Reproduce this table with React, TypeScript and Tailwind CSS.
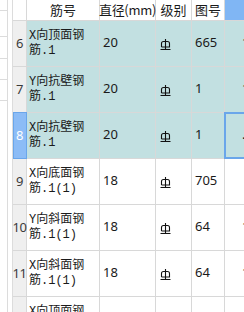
import React from 'react';

type Row = {
  no: number;
  name: string[];
  dia: string;
  fig: string;
  tail: string;
  active?: boolean;
  current?: boolean;
};

const rows: Row[] = [
  { no: 6, name: ['X向顶面钢', '筋.1'], dia: '20', fig: '665', tail: '1', active: true },
  { no: 7, name: ['Y向抗壁钢', '筋.1'], dia: '20', fig: '1', tail: '1', active: true },
  { no: 8, name: ['X向抗壁钢', '筋.1'], dia: '20', fig: '1', tail: '.', active: true, current: true },
  { no: 9, name: ['X向底面钢', '筋.1(1)'], dia: '18', fig: '705', tail: '' },
  { no: 10, name: ['Y向斜面钢', '筋.1(1)'], dia: '18', fig: '64', tail: '1' },
  { no: 11, name: ['X向斜面钢', '筋.1(1)'], dia: '18', fig: '64', tail: '1' },
  { no: 12, name: ['X向顶面钢', '筋.1'], dia: '20', fig: '665', tail: '' },
];

function GradeIII() {
  return (
    <svg width="11" height="11" viewBox="0 0 11 11" fill="none" stroke="#111" strokeWidth="1.1">
      <path d="M5.5 0 V10" />
      <path d="M1.5 8 V4.5 Q1.5 2.5 3.5 2.5 H7.5 Q9.5 2.5 9.5 4.5 V8 H1.5" />
      <path d="M0.5 10.5 H10.5" />
    </svg>
  );
}

export default function App() {
  return (
    <div className="w-[244px] h-[312px] overflow-hidden bg-white flex text-[13px] text-[#1a1a1a] font-['Noto_Sans_CJK_SC','Noto_Sans',sans-serif]">
      <div className="w-[8px] shrink-0 border-r border-[#dcdcdc] flex flex-col">
        <div className="h-[11px] border-b border-[#dcdcdc]" />
        <div className="h-[26px] border-b border-[#dcdcdc]" />
        <div className="h-[22px] border-b border-[#dcdcdc]" />
        <div className="h-[21px] border-b border-[#dcdcdc]" />
        <div className="h-[21px] border-b border-[#dcdcdc]" />
      </div>
      <div className="w-[5px] shrink-0 border-r border-[#dcdcdc]" />

      <div className="flex-1 min-w-0 flex flex-col">
        <div className="h-[21px] shrink-0 flex border-b border-[#d8d8d8]">
          <div className="w-[14px] shrink-0 border-r border-[#d8d8d8]" />
          <div className="w-[73px] shrink-0 border-r border-[#d8d8d8] flex items-center justify-center">筋号</div>
          <div className="w-[56px] shrink-0 border-r border-[#d8d8d8] flex items-center justify-center whitespace-nowrap tracking-[-0.3px]">直径(mm)</div>
          <div className="w-[36px] shrink-0 border-r border-[#d8d8d8] flex items-center justify-center">级别</div>
          <div className="w-[33px] shrink-0 border-r border-[#d8d8d8] flex items-center justify-center">图号</div>
          <div className="flex-1 bg-[#80b6f4]" />
        </div>

        {rows.map(r => (
          <div
            key={r.no}
            className={`h-[46px] shrink-0 flex border-b border-[#d8d8d8] ${r.active ? 'bg-[#c2e0e1]' : 'bg-white'}`}
          >
            <div
              className={`w-[14px] shrink-0 border-r border-[#d8d8d8] relative flex items-center justify-center ${r.current ? 'text-white' : 'bg-[#efefef] text-[#3b3b3b]'}`}
            >
              {r.current && <div className="absolute left-0 right-[-1px] top-[-1px] bottom-[-1px] bg-[#8cbcf6] border border-[#6aa6ea]" />}
              <span className="relative font-['Noto_Sans',sans-serif] text-[13px] tracking-[-0.5px]">{r.no}</span>
            </div>
            <div className="w-[73px] shrink-0 border-r border-[#d8d8d8] pl-[2px] flex flex-col justify-center text-[12px] leading-[15px] whitespace-nowrap font-['Liberation_Mono','Noto_Sans_CJK_SC',monospace]">
              <span>{r.name[0]}</span>
              <span>{r.name[1]}</span>
            </div>
            <div className="w-[56px] shrink-0 border-r border-[#d8d8d8] pl-[3px] flex items-center pb-[2px] font-['Noto_Sans',sans-serif]">
              {r.dia}
            </div>
            <div className="w-[36px] shrink-0 border-r border-[#d8d8d8] pl-[4px] flex items-center pt-[2px]">
              <GradeIII />
            </div>
            <div className="w-[33px] shrink-0 border-r border-[#d8d8d8] pl-[3px] flex items-center pb-[2px] font-['Noto_Sans',sans-serif]">
              {r.fig}
            </div>
            <div className="flex-1 relative pl-[17px] flex items-center pb-[2px] font-['Noto_Sans',sans-serif] whitespace-nowrap">
              {r.current && <div className="absolute left-[-1px] right-[-6px] top-[-1px] bottom-[-1px] border-2 border-[#6aa6ea]" />}
              <span className="relative">{r.tail}</span>
            </div>
          </div>
        ))}
      </div>
    </div>
  );
}
